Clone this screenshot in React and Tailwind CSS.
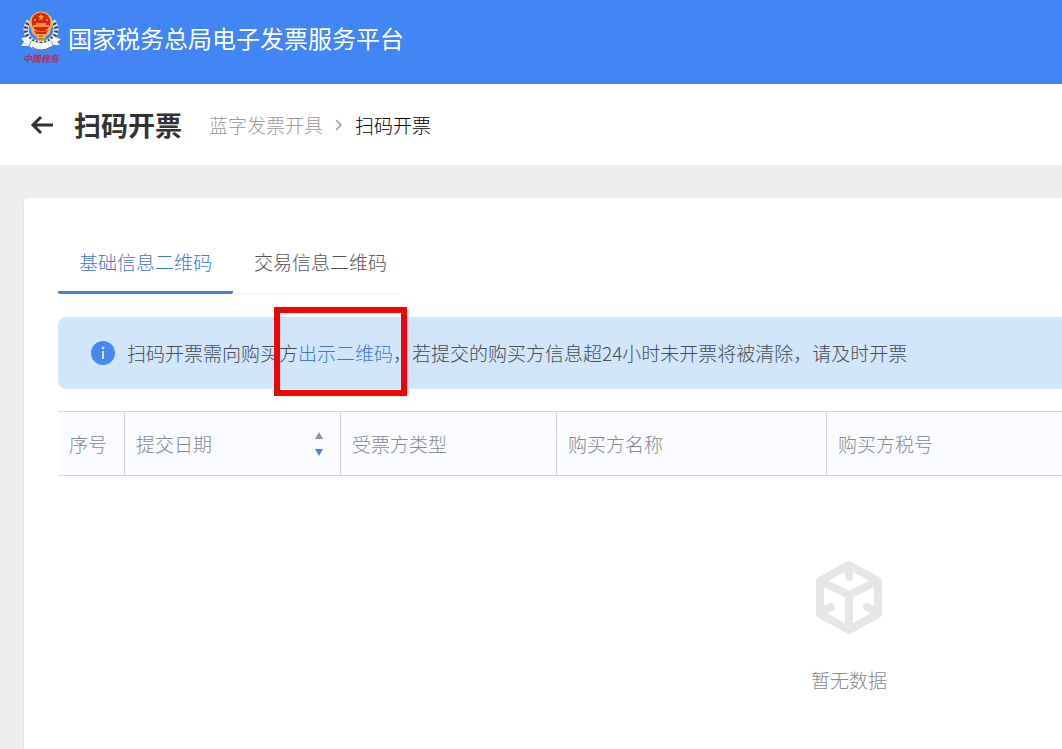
import { useState } from "react";

const tabs = [
  { id: "base", label: "基础信息二维码" },
  { id: "trade", label: "交易信息二维码" },
];

function TaxEmblem() {
  return (
    <svg viewBox="0 0 42 56" className="h-14 w-[42px] shrink-0" aria-hidden="true">
      {/* wheat ears */}
      <path d="M9 11 Q3 20 9 28 Q14 33 21 34" fill="none" stroke="#dfe6ea" strokeWidth="5" />
      <path d="M33 11 Q39 20 33 28 Q28 33 21 34" fill="none" stroke="#dfe6ea" strokeWidth="5" />
      <path d="M8 13 Q3 21 9 28 Q14 33 21 34" fill="none" stroke="#39445a" strokeWidth="4" strokeDasharray="2 2" />
      <path d="M34 13 Q39 21 33 28 Q28 33 21 34" fill="none" stroke="#39445a" strokeWidth="4" strokeDasharray="2 2" />
      {/* national emblem */}
      <circle cx="21" cy="13" r="11.5" fill="#f0b558" />
      <path d="M11 19 Q12 25 16 26 L18 31 H24 L26 26 Q30 25 31 19 Z" fill="#efb04a" />
      <circle cx="21" cy="12" r="9.5" fill="#e0230f" />
      <path d="M21 4 l1 2 h2 l-2 2 1 2 -2 -1 -2 1 1 -2 -2 -2 h2 Z" fill="#f8b53e" />
      <circle cx="15" cy="10" r="1" fill="#f8b53e" />
      <circle cx="27" cy="10" r="1" fill="#f8b53e" />
      <path d="M13 17 h16 v-2 h-3 v-2 h-10 v2 h-3 Z" fill="#f39a2e" />
      <path d="M14 20 Q21 24 28 20 L26 24 H16 Z" fill="#d3260f" />
      <path d="M19 26 h4 M18 29 h6" stroke="#8a5a2c" strokeWidth="1" />
      {/* ribbon */}
      <path
        d="M1 28 L8 27 Q13 33 21 33 Q29 33 34 27 L41 29 L37 32 L40 35 L33 35 Q28 40 21 40 Q14 40 9 36 L1 36 L4 32 Z"
        fill="#f7fbff"
      />
      <path d="M9 36 L11 31 M33 35 L31 31" stroke="#7f93b4" strokeWidth="1" />
      <path d="M12 37 Q21 43 31 37" fill="none" stroke="#5a6b8c" strokeWidth="1" />
      <text
        x="21"
        y="52"
        textAnchor="middle"
        fontSize="9"
        fontWeight="700"
        fontStyle="italic"
        fill="#b3304f"
        fontFamily="'Noto Sans CJK SC', sans-serif"
      >
        中国税务
      </text>
    </svg>
  );
}

function BackArrow() {
  return (
    <svg viewBox="0 0 24 20" className="h-5 w-6" fill="none" stroke="#333" strokeWidth="3">
      <path d="M11 2 L3 10 L11 18 M3 10 H23" />
    </svg>
  );
}

function InfoIcon() {
  return (
    <svg viewBox="0 0 24 24" className="size-6 shrink-0" aria-hidden="true">
      <circle cx="12" cy="12" r="12" fill="#4687f0" />
      <circle cx="12" cy="7" r="1.4" fill="#d3e7fa" />
      <path d="M12 10 V18" stroke="#d3e7fa" strokeWidth="2" />
    </svg>
  );
}

function EmptyBox() {
  return (
    <svg viewBox="0 0 66 76" className="h-[76px] w-[66px]" aria-hidden="true">
      <path
        d="M33 5 L62 21 V54 L33 70 L4 54 V21 Z M4 21 L33 35 L62 21 M33 35 V70"
        fill="none"
        stroke="#e6e6e6"
        strokeWidth="8"
        strokeLinejoin="round"
      />
      <path
        d="M33 8 V17 M8 50 L15 47 M58 50 L51 47"
        stroke="#e6e6e6"
        strokeWidth="8"
        strokeLinecap="round"
      />
    </svg>
  );
}

function SortButtons() {
  return (
    <button type="button" aria-label="排序" className="flex w-4 flex-col items-center gap-2.5">
      <svg viewBox="0 0 8 7" className="h-[7px] w-2">
        <path d="M4 0 L8 7 H0 Z" fill="#909399" />
      </svg>
      <svg viewBox="0 0 8 7" className="h-[7px] w-2">
        <path d="M4 7 L8 0 H0 Z" fill="#4c84dc" />
      </svg>
    </button>
  );
}

export default function App() {
  const [activeTab, setActiveTab] = useState("base");

  return (
    <div className="flex min-h-screen flex-col overflow-x-hidden bg-[#eeeeee] font-['Noto_Sans_CJK_SC',sans-serif] text-[19px] leading-7 font-light">
      <header className="flex h-21 items-center gap-1.5 bg-[#4285f4] px-5 pb-2">
        <TaxEmblem />
        <span className="text-2xl font-normal text-white">国家税务总局电子发票服务平台</span>
      </header>

      <div className="flex h-[81px] items-center bg-white px-[30px]">
        <button type="button" aria-label="返回">
          <BackArrow />
        </button>
        <h1 className="ml-5 text-[27px] font-bold text-[#333]">扫码开票</h1>
        <nav className="ml-[27px] flex items-center">
          <a href="#" className="text-[#999]">
            蓝字发票开具
          </a>
          <svg viewBox="0 0 8 12" className="mx-3 h-3 w-2" fill="none" stroke="#999" strokeWidth="1.5">
            <path d="M1 1 L6 6 L1 11" />
          </svg>
          <span className="text-black">扫码开票</span>
        </nav>
      </div>

      <main className="mt-[33px] ml-6 flex-1 rounded-tl bg-white pt-9 pl-[34px] shadow-sm">
        <div role="tablist" className="flex">
          {tabs.map((tab) => (
            <button
              key={tab.id}
              type="button"
              role="tab"
              aria-selected={activeTab === tab.id}
              onClick={() => setActiveTab(tab.id)}
              className={
                activeTab === tab.id
                  ? "h-15 rounded-b-xs border-b-3 border-[#4c7fd0] px-[21px] pb-0.5 text-[#3f78d2]"
                  : "h-15 border-b border-[#f0f0f0] pr-3 pb-1 pl-[21px] text-[#555]"
              }
            >
              {tab.label}
            </button>
          ))}
        </div>

        <div className="mt-[23px] flex h-18 items-center gap-3 rounded-l-lg bg-[#d1e6fa] pl-[33px]">
          <InfoIcon />
          <p className="whitespace-nowrap text-[#444c55]">
            扫码开票需向购买方
            <span className="relative">
              <a href="#" className="text-[#3f78d2]">
                出示二维码
              </a>
              {/* highlight frame round the link */}
              <span className="pointer-events-none absolute -top-8 -right-3.5 -left-6 h-[89px] border-6 border-[#f00505]" />
            </span>
            ，若提交的购买方信息超24小时未开票将被清除，请及时开票
          </p>
        </div>

        {/* the table is wider than small windows and is cut at the right edge */}
        <div className="mt-[22px] overflow-x-hidden">
          <table className="w-full min-w-[1582px] table-fixed border-separate border-spacing-0 text-left">
            <thead>
              <tr className="h-[65px] text-[#85888e] *:border-y *:border-r *:border-[#d3d7dc] *:bg-[#fafcff] *:px-[11px] *:font-light">
                <th className="w-[67px]">序号</th>
                <th className="w-[216px]">
                  <div className="flex items-center justify-between pr-0.5">
                    提交日期
                    <SortButtons />
                  </div>
                </th>
                <th className="w-[216px]">受票方类型</th>
                <th className="w-[270px]">购买方名称</th>
                <th>购买方税号</th>
              </tr>
            </thead>
            <tbody>
              <tr>
                <td colSpan={5} className="pt-[84px] pb-12">
                  <div className="flex flex-col items-center gap-[30px] text-[#85888e]">
                    <EmptyBox />
                    <p>暂无数据</p>
                  </div>
                </td>
              </tr>
            </tbody>
          </table>
        </div>
      </main>
    </div>
  );
}
